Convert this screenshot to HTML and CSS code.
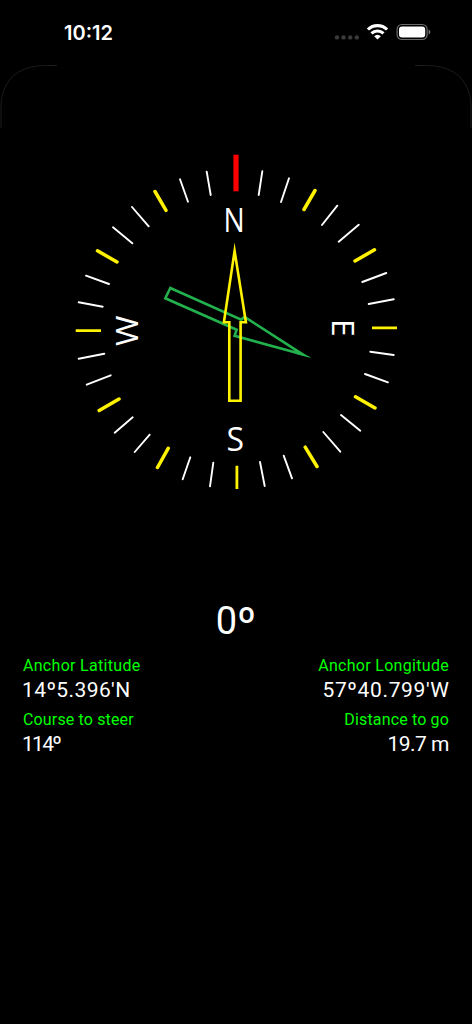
FILE: index.html
```
<!DOCTYPE html>
<html lang="en">
<head>
  <meta charset="UTF-8" />
  <meta name="viewport" content="width=device-width, initial-scale=1.0"/>
  <title>Anchor Compass</title>
  <link rel="stylesheet" href="styles.css">
</head>
<body>

  <!-- Status Bar -->
  <div class="status-bar">
    <div class="time">10:12</div>
    <svg class="status-icons" width="98" height="18" viewBox="334 23 98 18">
      <g fill="#3a3a3a">
        <circle cx="337" cy="37.4" r="2.2"/>
        <circle cx="343.5" cy="37.4" r="2.2"/>
        <circle cx="350.2" cy="37.4" r="2.2"/>
        <circle cx="356.8" cy="37.4" r="2.2"/>
      </g>
      <g fill="none" stroke="#fff" stroke-width="3.1">
        <path d="M367.9 29.5a13.9 13.9 0 0 1 19.2 0"/>
        <path d="M371.5 33.4a8.6 8.6 0 0 1 12 0"/>
      </g>
      <path fill="#fff" d="M377.5 39.6l-3.4-3.3a5 5 0 0 1 6.8 0z"/>
      <rect x="397.1" y="24.5" width="30" height="15" rx="4.8" fill="none" stroke="#6b6b6b" stroke-width="1.2"/>
      <rect x="399" y="26.5" width="26.2" height="11" rx="3" fill="#fff"/>
      <path fill="#777" d="M428.6 29.6c1.1.4 1.7 1.3 1.7 2.4s-.6 2-1.7 2.4z"/>
    </svg>
  </div>

  <!-- Sheet Corners -->
  <div class="corners">
    <svg width="58" height="64" viewBox="0 0 58 64">
      <path d="M57 .5H46C16 .5 1 17 1 43V63"/>
    </svg>
    <svg width="58" height="64" viewBox="0 0 58 64">
      <path d="M1 .5H12C42 .5 57 17 57 43V63"/>
    </svg>
  </div>

  <!-- Compass -->
  <svg class="compass" width="340" height="355" viewBox="66 145 340 355">
    <path class="north" d="M236 154.7V191.3"/>
    <path class="tick" d="M206.7 171.7L210.7 195M180 179.3L188 201.7M132 207L148.7 226.3M113 227.3L132.3 243.3M86 275.7L109 284M78.7 302.3L102.7 306.7"/>
    <path class="tick" d="M262.3 171.3L258.7 195M289 178.3L281 202M337.3 205.7L322 225M358.7 224.7L338.7 241.7M386.3 273L362.3 282M393.7 299.3L368.7 304"/>
    <path class="tick" d="M78.7 358.7L104.3 353.7M86.7 384.7L110.7 375.3M114.7 432.7L132.7 417.3M134.7 452L149.7 434.7M182.7 479.3L190.3 457.3M210 486.3L213.3 462.7"/>
    <path class="tick" d="M370.3 351.7L393.7 355M365 374L388 382.3M341 415L360.3 430.7M323.3 432L340.3 451.7M283.7 455.7L292 478.3M260 462L264.7 486"/>
    <path class="tick-major" d="M155 191.5L166 210.3M97.5 250.8L117 262M315 190.5L304 209.5M374.5 249.8L355 261M99.2 410.5L119 399M157.5 467.5L168.2 448.3M355.5 396.8L375 408M305.2 447.2L317 466.5"/>
    <path class="tick-main" d="M75.7 330.6H101M372 327.8H397M236.9 465.7V489"/>

    <text class="letter" transform="translate(234.2 232.2) scale(.88 1)">N</text>
    <text class="letter" x="235.3" y="450.8">S</text>
    <text class="letter" transform="translate(331.5 327.8) rotate(90) scale(1 .97)">E</text>
    <text class="letter" transform="translate(138.4 330.7) rotate(-90) scale(1.03 .97)">W</text>

    <path class="needle anchor" d="M170.3 288L165.3 298.3L236.7 329.7L234.6 335.8L303 354.6L244.5 316.8L241.3 319.6Z"/>
    <path class="anchor-tip" d="M297 350.8L311.5 357.8L295 353.8Z"/>
    <path class="needle heading" d="M234.6 251L223.9 322.3H229.3V400.7H240.6V322.3H245.9Z"/>
  </svg>

  <!-- Readings -->
  <div class="bearing">0<span>º</span></div>
  <div class="readings">
    <div class="reading">
      <div class="label">Anchor Latitude</div>
      <div class="value latitude">14º5.396'N</div>
    </div>
    <div class="reading right">
      <div class="label">Anchor Longitude</div>
      <div class="value longitude">57º40.799'W</div>
    </div>
    <div class="reading">
      <div class="label tight">Course to steer</div>
      <div class="value course">114º</div>
    </div>
    <div class="reading right">
      <div class="label tight">Distance to go</div>
      <div class="value distance">19.7 m</div>
    </div>
  </div>

</body>
</html>
```
FILE: styles.css
```
* { margin: 0; padding: 0; box-sizing: border-box; }

body {
  background-color: #000;
  color: #fff;
  font-family: Roboto, "Liberation Sans", sans-serif;
  min-height: 1024px;
  overflow: hidden;
}

.status-bar {
  height: 65px;
  display: flex;
  justify-content: space-between;
  padding: 20px 40px 0 64px;
}

.time {
  font-family: Inter, sans-serif;
  font-size: 20px;
  font-weight: 600;
  line-height: 26px;
}

.status-icons {
  margin-top: 3px;
}

.corners {
  display: flex;
  justify-content: space-between;
  height: 64px;
}

.corners path {
  fill: none;
  stroke: #1c1c1c;
  stroke-width: 1;
}

.compass {
  display: block;
  margin: 16px auto 0;
}

.north {
  stroke: #f00;
  stroke-width: 5.2;
}

.tick {
  stroke: #fff;
  stroke-width: 1.9;
  stroke-linecap: round;
}

.tick-major, .tick-main {
  stroke: #fff200;
  stroke-width: 3.5;
  stroke-linecap: round;
}

.tick-main {
  stroke-width: 2.8;
  stroke-linecap: butt;
}

.letter {
  font-family: "Open Sans", sans-serif;
  font-size: 32px;
  fill: #fff;
  text-anchor: middle;
}

.needle {
  fill: none;
  stroke-width: 2.6;
  stroke-miterlimit: 12;
}

.needle.anchor { stroke: #22b14c; }
.needle.heading { stroke: #fff200; }
.anchor-tip { fill: #22b14c; }

/* --- READINGS --- */
.bearing {
  margin-top: 98px;
  font-size: 38px;
  line-height: 46px;
  text-align: center;
}

.bearing span {
  font-size: 42px;
  line-height: 0;
  vertical-align: -3px;
}

.readings {
  display: grid;
  grid-template-columns: 1fr 1fr;
  row-gap: 5px;
  padding: 11px 23px 0;
}

.reading.right {
  text-align: right;
}

.label {
  color: #0f0;
  font-size: 16px;
  line-height: 22px;
  letter-spacing: 0.3px;
}

.label.tight { letter-spacing: 0.15px; }

.value {
  font-size: 21px;
  line-height: 27px;
}

.latitude { letter-spacing: 0.4px; margin-left: -1px; }
.longitude { letter-spacing: 0.65px; margin-right: -0.65px; }
.course { letter-spacing: -1.7px; margin-left: -1px; }
.distance { letter-spacing: -0.5px; }
```
